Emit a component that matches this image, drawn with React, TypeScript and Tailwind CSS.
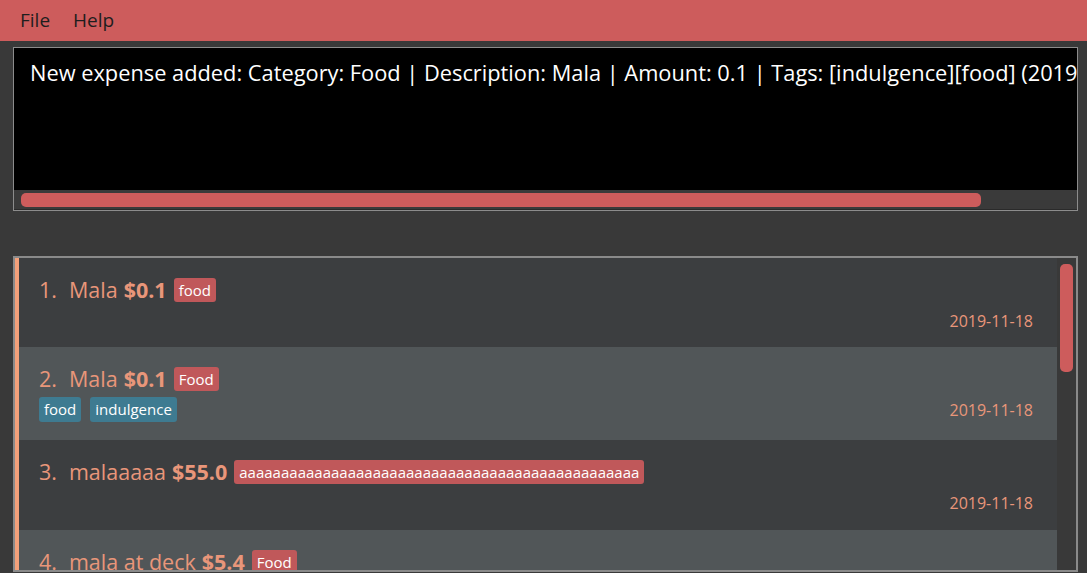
import React from 'react';

type Expense = {
  id: number;
  description: string;
  amount: string;
  category: string;
  tags: string[];
  date: string;
  height: string;
};

const expenses: Expense[] = [
  { id: 1, description: 'Mala', amount: '$0.1', category: 'food', tags: [], date: '2019-11-18', height: 'h-[89px]' },
  { id: 2, description: 'Mala', amount: '$0.1', category: 'Food', tags: ['food', 'indulgence'], date: '2019-11-18', height: 'h-[93px]' },
  { id: 3, description: 'malaaaaa', amount: '$55.0', category: 'a'.repeat(48), tags: [], date: '2019-11-18', height: 'h-[90px]' },
  { id: 4, description: 'mala at deck', amount: '$5.4', category: 'Food', tags: [], date: '2019-11-18', height: 'h-[90px]' },
];

const FONT = "font-['Segoe_UI','Open_Sans','Noto_Sans',sans-serif]";

const ExpenseCard: React.FC<{ expense: Expense; index: number }> = ({ expense, index }) => (
  <div
    className={`${expense.height} shrink-0 border-l-4 border-[#f4a07a] pl-[20px] pr-[24px] pt-[20px] flex flex-col ${
      index % 2 === 0 ? 'bg-[#3c3e40]' : 'bg-[#515658]'
    }`}
  >
    <div className="flex h-[24px] items-center text-[21.5px] leading-none text-[#e9967a]">
      <span>{expense.id}.</span>
      <span className="ml-[12px]">{expense.description}</span>
      <span className="ml-[6px] font-bold">{expense.amount}</span>
      <span className="ml-[7px] flex h-[24px] items-center rounded-[3px] bg-[#c0585a] px-[5px] text-[15px] text-white">
        {expense.category}
      </span>
    </div>
    <div className="mt-[6px] flex h-[25px] items-center justify-between">
      <div className="flex gap-[9px]">
        {expense.tags.map((tag) => (
          <span key={tag} className="flex h-[25px] items-center rounded-[3px] bg-[#3e7b91] px-[5px] text-[15px] text-white">
            {tag}
          </span>
        ))}
      </div>
      <span className="text-[16px] text-[#e9967a]">{expense.date}</span>
    </div>
  </div>
);

const App: React.FC = () => {
  return (
    <div className={`${FONT} flex h-[573px] w-[1087px] flex-col overflow-hidden bg-[#393939]`}>
      <div className="flex h-[41px] shrink-0 items-center gap-[23px] bg-[#cd5c5c] px-[20px] text-[19px] text-[#1e1e1e]">
        <span>File</span>
        <span>Help</span>
      </div>

      <div className="ml-[13px] mt-[6px] flex h-[164px] w-[1065px] shrink-0 flex-col border border-[#8c8c8c] bg-black">
        <div className="flex-1 overflow-hidden whitespace-nowrap px-[16px] pt-[9px] text-[21.8px] text-white">
          New expense added: Category: Food | Description: Mala | Amount: 0.1 | Tags: [indulgence][food] (2019-11-18)
        </div>
        <div className="flex h-[20px] items-center border-b border-[#2a2a2a] bg-[#3a3a3a] px-[7px]">
          <div className="h-[14px] w-[960px] rounded-[5px] bg-[#cd5c5c]" />
        </div>
      </div>

      <div className="ml-[13px] mt-[45px] flex h-[316px] w-[1065px] shrink-0 border-2 border-[#8a8a8a] bg-[#3a3a3a]">
        <div className="flex flex-1 flex-col overflow-hidden">
          {expenses.map((expense, index) => (
            <ExpenseCard key={expense.id} expense={expense} index={index} />
          ))}
        </div>
        <div className="w-[19px] shrink-0 bg-[#393939] pl-[3px] pt-[6px]">
          <div className="h-[108px] w-[13px] rounded-[5px] bg-[#cd5c5c]" />
        </div>
      </div>
    </div>
  );
};

export default App;
